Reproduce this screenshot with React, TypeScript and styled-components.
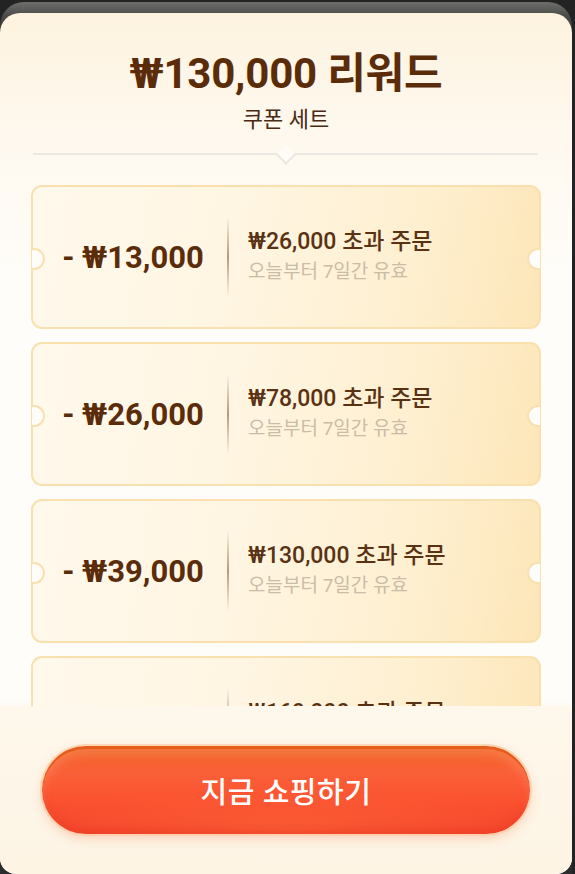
import React from "react";
import styled, { createGlobalStyle } from "styled-components";

type CouponData = {
  amount: string;
  minimum: string;
};

const coupons: CouponData[] = [
  { amount: "13,000", minimum: "26,000" },
  { amount: "26,000", minimum: "78,000" },
  { amount: "39,000", minimum: "130,000" },
  { amount: "52,000", minimum: "169,000" }
];

const GlobalStyle = createGlobalStyle`
  html, body {
    margin: 0;
    padding: 0;
    background: #222222;
  }
  body {
    font-family: Roboto, "Noto Sans CJK KR", sans-serif;
  }
  * {
    box-sizing: border-box;
  }
`;

const Page = styled.div`
  width: 575px;
  height: 874px;
  padding: 2px 3px 0 0;
  overflow: hidden;
  background: #232323;
`;

const BackSheet = styled.div`
  height: 100%;
  padding-top: 11px;
  border-radius: 24px 24px 0 0;
  background: linear-gradient(180deg, #6e6e6c 0%, #4a4a48 14px, #2c2c2c 40px);
`;

const Sheet = styled.div`
  height: 861px;
  display: flex;
  flex-direction: column;
  overflow: hidden;
  border-radius: 20px 20px 16px 16px;
  background: linear-gradient(
    180deg,
    #fdf3df 0%,
    #fef8ee 120px,
    #fffdf9 260px,
    #fffdfa 100%
  );
`;

const Header = styled.div`
  display: flex;
  flex-direction: column;
  align-items: center;
  padding-top: 37px;
`;

const Title = styled.h1`
  margin: 0;
  font-size: 42px;
  line-height: 48px;
  font-weight: 700;
  color: #5b2c0a;
  letter-spacing: -0.2px;
`;

const Subtitle = styled.div`
  margin-top: 8px;
  font-size: 22px;
  line-height: 28px;
  font-weight: 400;
  color: #4b2a15;
`;

const Divider = styled.div`
  position: relative;
  margin: 19px 34px 0 33px;
  height: 2px;
  background: #ebe7e2;

  &::after {
    content: "";
    position: absolute;
    left: 50%;
    top: 1px;
    width: 12px;
    height: 12px;
    transform: translateX(-50%) rotate(45deg);
    transform-origin: center;
    margin-top: -6px;
    background: #fffcf8;
    border-right: 2px solid #ebe7e2;
    border-bottom: 2px solid #ebe7e2;
  }
`;

const List = styled.div`
  flex: 1;
  min-height: 0;
  overflow: hidden;
  display: flex;
  flex-direction: column;
  gap: 13px;
  padding: 30px 31px 0 31px;
`;

const Coupon = styled.div`
  position: relative;
  flex: none;
  height: 144px;
  display: grid;
  grid-template-columns: 194px 2px 1fr;
  align-items: center;
  border: 2px solid #f8e1ae;
  border-radius: 11px;
  background: linear-gradient(
    100deg,
    #fff9ec 0%,
    #fff5e2 40%,
    #feefcf 75%,
    #fde6b8 100%
  );

  &::before,
  &::after {
    content: "";
    position: absolute;
    top: 50%;
    width: 18px;
    height: 18px;
    margin-top: -9px;
    border-radius: 50%;
    background: #fffdf9;
    border: 2px solid #f8e1ae;
  }

  &::before {
    left: -10px;
    clip-path: inset(0 0 0 9px);
  }

  &::after {
    right: -10px;
    clip-path: inset(0 9px 0 0);
  }
`;

const Amount = styled.div`
  padding-left: 6px;
  text-align: center;
  font-size: 31px;
  font-weight: 700;
  color: #5b2c0a;
  white-space: nowrap;
`;

const Rule = styled.div`
  height: 80px;
  background: linear-gradient(
    180deg,
    rgba(176, 140, 100, 0) 0%,
    rgba(160, 122, 84, 0.75) 50%,
    rgba(176, 140, 100, 0) 100%
  );
`;

const Terms = styled.div`
  display: flex;
  flex-direction: column;
  gap: 2px;
  padding-left: 19px;
  margin-top: -2px;
`;

const Minimum = styled.div`
  font-size: 23px;
  line-height: 30px;
  font-weight: 500;
  color: #5a3213;
  white-space: nowrap;
`;

const Validity = styled.div`
  font-size: 19px;
  line-height: 26px;
  color: #cbbca7;
  white-space: nowrap;
`;

const Footer = styled.div`
  flex: none;
  height: 168px;
  padding: 40px 42px 0 42px;
  background: linear-gradient(180deg, #fef8ec 0%, #fdf4e4 100%);
  box-shadow: 0 -2px 6px rgba(190, 160, 120, 0.06);
`;

const ShopButton = styled.button`
  width: 100%;
  height: 88px;
  border: none;
  border-radius: 44px;
  font-family: inherit;
  font-size: 29px;
  font-weight: 500;
  color: #ffffff;
  letter-spacing: 0.5px;
  background:
    radial-gradient(ellipse 60% 45% at 50% 95%, rgba(255, 110, 60, 0.55) 0%, rgba(255, 110, 60, 0) 100%),
    linear-gradient(180deg, #ea601c 0%, #f5622c 12%, #fa6038 30%, #fb5230 62%, #f2402a 100%);
  box-shadow:
    0 0 0 2px rgba(252, 206, 168, 0.75),
    0 4px 12px rgba(246, 120, 70, 0.3),
    inset 0 3px 0 rgba(230, 92, 26, 0.95),
    inset 0 9px 10px rgba(255, 160, 120, 0.4),
    inset 0 -4px 8px rgba(230, 50, 30, 0.35);
`;

const CouponCard = ({ coupon }: { coupon: CouponData }) => {
  return (
    <Coupon>
      <Amount>- ₩{coupon.amount}</Amount>
      <Rule />
      <Terms>
        <Minimum>₩{coupon.minimum} 초과 주문</Minimum>
        <Validity>오늘부터 7일간 유효</Validity>
      </Terms>
    </Coupon>
  );
};

const App = () => {
  return (
    <>
      <GlobalStyle />
      <Page>
        <BackSheet>
          <Sheet>
            <Header>
              <Title>₩130,000 리워드</Title>
              <Subtitle>쿠폰 세트</Subtitle>
            </Header>
            <Divider />
            <List>
              {coupons.map((c) => (
                <CouponCard key={c.amount} coupon={c} />
              ))}
            </List>
            <Footer>
              <ShopButton>지금 쇼핑하기</ShopButton>
            </Footer>
          </Sheet>
        </BackSheet>
      </Page>
    </>
  );
};

export default App;
